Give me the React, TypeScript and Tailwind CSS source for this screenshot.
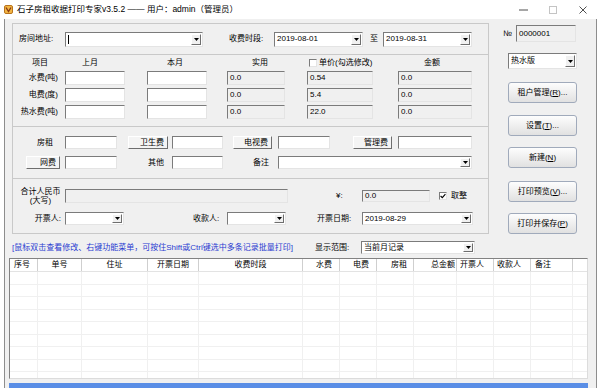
import React from "react";

const sunken =
  "border border-t-[#7b7b7b] border-l-[#7b7b7b] border-b-[#e4e4e4] border-r-[#e4e4e4]";
const raised =
  "border border-t-white border-l-white border-b-[#6e6e6e] border-r-[#6e6e6e]";

type BoxProps = { className?: string; value?: string; gray?: boolean; caret?: boolean };

function Caret() {
  return (
    <svg width="5" height="3" viewBox="0 0 5 3">
      <path d="M0 0H5L2.5 3Z" fill="#000" />
    </svg>
  );
}

function Combo({ className = "", value, caret }: BoxProps) {
  return (
    <div className={`${className} shrink-0 ${sunken} bg-white flex`}>
      <div className="flex-1 flex items-center pl-[2px] overflow-hidden whitespace-nowrap">
        {caret && <span className="w-px h-[9px] bg-black" />}
        {value}
      </div>
      <div className={`w-[10px] my-px mr-px flex items-center justify-center bg-[#f0f0f0] ${raised}`}>
        <Caret />
      </div>
    </div>
  );
}

function Field({ className = "", value, gray }: BoxProps) {
  return (
    <div
      className={`${className} shrink-0 ${sunken} ${gray ? "bg-[#f0f0f0]" : "bg-white"} flex items-center pl-[2px] overflow-hidden whitespace-nowrap`}
    >
      {value}
    </div>
  );
}

function FeeButton({ className = "", label }: { className?: string; label: string }) {
  return (
    <div className={`${className} shrink-0 h-full ${raised} bg-[#f4f4f4] flex items-center justify-end pr-[3px] whitespace-nowrap`}>
      {label}
    </div>
  );
}

function Label({ className = "", children }: { className?: string; children: React.ReactNode }) {
  return <span className={`${className} shrink-0 whitespace-nowrap`}>{children}</span>;
}

function Check({ className = "", checked = false }: { className?: string; checked?: boolean }) {
  return (
    <div className={`${className} shrink-0 w-[8px] h-[8px] ${sunken} bg-white flex items-center justify-center`}>
      {checked && (
        <svg width="6" height="6" viewBox="0 0 6 6">
          <path d="M0.6 3 L2.3 4.7 L5.4 1.2" stroke="#000" strokeWidth="1.1" fill="none" />
        </svg>
      )}
    </div>
  );
}

function Btn({ className = "", children }: { className?: string; children: React.ReactNode }) {
  return (
    <div
      className={`${className} ml-[10px] w-[69px] h-[21px] shrink-0 rounded-[3px] border border-[#a0aabb] bg-linear-to-b from-[#fdfdfd] to-[#e1e1e1] flex items-center justify-center whitespace-nowrap`}
    >
      {children}
    </div>
  );
}

const meterRows = [
  { label: "水费(吨)", price: "0.54" },
  { label: "电费(度)", price: "5.4" },
  { label: "热水费(吨)", price: "22.0" },
];

const columns = [
  { t: "序号", w: "w-[28px]", a: "justify-start pl-[4px]" },
  { t: "单号", w: "w-[44px]", a: "justify-center" },
  { t: "住址", w: "w-[66px]", a: "justify-center" },
  { t: "开票日期", w: "w-[51px]", a: "justify-center" },
  { t: "收费时段", w: "w-[104px]", a: "justify-center" },
  { t: "水费", w: "w-[37px]", a: "justify-end pr-[7px]" },
  { t: "电费", w: "w-[37px]", a: "justify-end pr-[7px]" },
  { t: "房租", w: "w-[37px]", a: "justify-end pr-[6px]" },
  { t: "总金额", w: "w-[43px]", a: "justify-end pr-[1px]" },
  { t: "开票人", w: "w-[37px]", a: "justify-start pl-[3px]" },
  { t: "收款人", w: "w-[37px]", a: "justify-start pl-[3px]" },
  { t: "备注", w: "w-[42px]", a: "justify-start pl-[4px]" },
];

function TitleBar() {
  return (
    <div className="h-[19px] flex items-center bg-white">
      <svg className="ml-[4px] shrink-0" width="9" height="9" viewBox="0 0 9 9">
        <rect x="0.5" y="0.5" width="8" height="8" rx="1.5" fill="#f2b544" stroke="#b9731c" />
        <path d="M2 2.5 L4.5 6.5 L7 2.5" stroke="#8a3b12" strokeWidth="1.4" fill="none" />
      </svg>
      <span className="ml-[4px] whitespace-nowrap text-[8.5px]">石子房租收据打印专家v3.5.2 —— 用户：admin（管理员）</span>
      <div className="ml-auto mr-[2px] flex">
        <div className="w-[30px] h-[19px] flex items-center justify-center">
          <svg width="9" height="9" viewBox="0 0 9 9">
            <path d="M0 5H9" stroke="#222" strokeWidth="0.8" />
          </svg>
        </div>
        <div className="w-[30px] h-[19px] flex items-center justify-center">
          <svg width="8" height="8" viewBox="0 0 8 8">
            <rect x="0.5" y="0.5" width="7" height="7" stroke="#c4c4c4" fill="none" />
          </svg>
        </div>
        <div className="w-[30px] h-[19px] flex items-center justify-center">
          <svg width="8" height="8" viewBox="0 0 8 8">
            <path d="M0.5 0.5L7.5 7.5M7.5 0.5L0.5 7.5" stroke="#222" strokeWidth="0.8" />
          </svg>
        </div>
      </div>
    </div>
  );
}

function FormBox() {
  return (
    <div className="ml-[7px] mt-[4px] w-[477px] h-[211px] shrink-0 border border-[#c9c9c9] flex flex-col">
      <div className="h-[31px] shrink-0 border-b border-[#c9c9c9] flex items-center">
        <Label className="ml-[6px] w-[46px]">房间地址:</Label>
        <Combo className="w-[138px] h-[15px]" caret />
        <Label className="ml-[26px] w-[45px]">收费时段:</Label>
        <Combo className="w-[89px] h-[15px]" value="2019-08-01" />
        <Label className="ml-[7px] w-[13px]">至</Label>
        <Combo className="w-[89px] h-[15px]" value="2019-08-31" />
      </div>

      <div className="h-[72px] shrink-0 border-b border-[#c9c9c9]">
        <div className="flex items-center h-[16px]">
          <Label className="ml-[19px] w-[16px]">项目</Label>
          <Label className="ml-[34px] w-[16px]">上月</Label>
          <Label className="ml-[69px] w-[16px]">本月</Label>
          <Label className="ml-[69px] w-[16px]">实用</Label>
          <Check className="ml-[41px]" />
          <Label className="ml-[2px] w-[60px]">单价(勾选修改)</Label>
          <Label className="ml-[45px] w-[16px]">金额</Label>
        </div>
        {meterRows.map((r) => (
          <div key={r.label} className="flex items-center h-[14px] mb-[3px]">
            <Label className="w-[49px] text-right pr-[4px]">{r.label}</Label>
            <Field className="ml-[3px] w-[60px] h-full" />
            <Field className="ml-[22px] w-[60px] h-full" />
            <Field className="ml-[20px] w-[58px] h-full" gray value="0.0" />
            <Field className="ml-[22px] w-[66px] h-full" gray value={r.price} />
            <Field className="ml-[25px] w-[74px] h-full" gray value="0.0" />
          </div>
        ))}
      </div>

      <div className="h-[52px] shrink-0 border-b border-[#c9c9c9] pt-[9px]">
        <div className="flex items-center h-[13px]">
          <Label className="w-[52px] text-right pr-[12px]">房租</Label>
          <Field className="w-[52px] h-full" />
          <FeeButton className="ml-[11px] w-[40px]" label="卫生费" />
          <Field className="ml-[4px] w-[51px] h-full" />
          <FeeButton className="ml-[10px] w-[39px]" label="电视费" />
          <Field className="ml-[6px] w-[52px] h-full" />
          <FeeButton className="ml-[23px] w-[39px]" label="管理费" />
          <Field className="ml-[6px] w-[74px] h-full" />
        </div>
        <div className="flex items-center h-[13px] mt-[7px]">
          <FeeButton className="ml-[13px] w-[34px]" label="网费" />
          <Field className="ml-[5px] w-[52px] h-full" />
          <Label className="ml-[31px] w-[16px]">其他</Label>
          <Field className="ml-[8px] w-[51px] h-full" />
          <Label className="ml-[30px] w-[16px]">备注</Label>
          <Combo className="ml-[9px] w-[194px] h-full" />
        </div>
      </div>

      <div className="flex-1 pt-[9px]">
        <div className="flex items-center h-[15px]">
          <div className="ml-[6px] w-[43px] shrink-0 text-center leading-[9px] whitespace-nowrap">
            合计人民币
            <br />
            (大写)
          </div>
          <Field className="ml-[3px] w-[223px] h-[14px]" gray />
          <Label className="ml-[48px] w-[26px]">¥:</Label>
          <Field className="w-[68px] h-[12px]" gray value="0.0" />
          <Check className="ml-[9px]" checked />
          <Label className="ml-[4px]">取整</Label>
        </div>
        <div className="flex items-center h-[13px] mt-[9px]">
          <Label className="w-[52px] text-right pr-[4px]">开票人:</Label>
          <Combo className="w-[59px] h-full" />
          <Label className="ml-[69px] w-[34px]">收款人:</Label>
          <Combo className="w-[59px] h-full" />
          <Label className="ml-[31px] w-[45px]">开票日期:</Label>
          <Combo className="w-[111px] h-full" value="2019-08-29" />
        </div>
      </div>
    </div>
  );
}

function SidePanel() {
  return (
    <div className="ml-[9px] w-[92px] shrink-0 flex flex-col">
      <div className="mt-[6px] flex items-center h-[17px]">
        <Label className="ml-[5px] w-[13px]">№</Label>
        <Field className="w-[60px] h-full" gray value="0000001" />
      </div>
      <Combo className="mt-[11px] ml-[10px] w-[69px] h-[16px]" value="热水版" />
      <Btn className="mt-[13px]">
        租户管理(<u>R</u>)...
      </Btn>
      <Btn className="mt-[12px]">
        设置(<u>T</u>)...
      </Btn>
      <Btn className="mt-[11px]">
        新建(<u>N</u>)
      </Btn>
      <Btn className="mt-[13px]">
        打印预览(<u>V</u>)...
      </Btn>
      <Btn className="mt-[11px]">
        打印并保存(<u>P</u>)
      </Btn>
    </div>
  );
}

function RecordTable() {
  return (
    <div className="ml-[4px] mt-[2px] w-[579px] h-[121px] shrink-0 overflow-hidden bg-white border border-t-[#828282] border-l-[#828282] border-b-[#dcdcdc] border-r-[#dcdcdc]">
      <div className="flex h-[13px] border-b border-[#e3e3e3]">
        {columns.map((c) => (
          <div key={c.t} className={`${c.w} shrink-0 h-full border-r border-[#cfcfcf] flex items-center ${c.a} whitespace-nowrap`}>
            {c.t}
          </div>
        ))}
      </div>
      {Array.from({ length: 9 }).map((_, i) => (
        <div key={i} className="flex h-[12.5px] border-b border-[#f0f0f0]">
          {columns.map((c) => (
            <div key={c.t} className={`${c.w} shrink-0 h-full border-r border-[#f0f0f0]`} />
          ))}
        </div>
      ))}
    </div>
  );
}

export default function App() {
  return (
    <div className="w-[600px] h-[388px] overflow-hidden bg-white text-black text-[8px] leading-none font-['Liberation_Sans','Noto_Sans_CJK_SC',sans-serif]">
      <TitleBar />
      <div className="ml-[4px] w-[593px] h-[369px] border-x border-[#8d8d8d] bg-[#f0f0f0] flex flex-col">
        <div className="flex h-[215px] shrink-0">
          <FormBox />
          <SidePanel />
        </div>

        <div className="flex items-center h-[17px] mt-[5px] shrink-0">
          <span className="ml-[7px] w-[303px] shrink-0 whitespace-nowrap text-[#2a3bd0]">
            [鼠标双击查看修改、右键功能菜单，可按住Shift或Ctrl键选中多条记录批量打印]
          </span>
          <Label className="w-[46px]">显示范围:</Label>
          <Combo className="w-[114px] h-[13px]" value="当前月记录" />
        </div>

        <RecordTable />

        <div className="ml-[4px] mt-[4px] w-[579px] h-[5px] shrink-0 bg-[#5a8ee6]" />
      </div>
    </div>
  );
}
